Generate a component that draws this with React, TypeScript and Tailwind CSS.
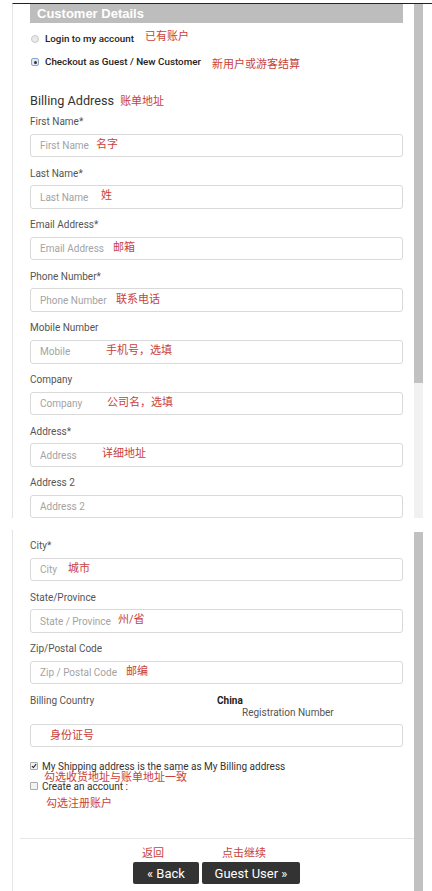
import type { ReactNode } from "react";

type Field = {
  label: string;
  placeholder: string;
  note?: string;
  noteLeft?: string;
};

const billingTop: Field[] = [
  { label: "First Name*", placeholder: "First Name", note: "名字", noteLeft: "left-[66px]" },
  { label: "Last Name*", placeholder: "Last Name", note: "姓", noteLeft: "left-[71px]" },
  { label: "Email Address*", placeholder: "Email Address", note: "邮箱", noteLeft: "left-[83px]" },
  { label: "Phone Number*", placeholder: "Phone Number", note: "联系电话", noteLeft: "left-[86px]" },
  { label: "Mobile Number", placeholder: "Mobile", note: "手机号，选填", noteLeft: "left-[76px]" },
  { label: "Company", placeholder: "Company", note: "公司名，选填", noteLeft: "left-[77px]" },
  { label: "Address*", placeholder: "Address", note: "详细地址", noteLeft: "left-[72px]" },
  { label: "Address 2", placeholder: "Address 2" },
];

const billingBottom: Field[] = [
  { label: "City*", placeholder: "City", note: "城市", noteLeft: "left-[38px]" },
  { label: "State/Province", placeholder: "State / Province", note: "州/省", noteLeft: "left-[88px]" },
  { label: "Zip/Postal Code", placeholder: "Zip / Postal Code", note: "邮编", noteLeft: "left-[96px]" },
];

const Note = ({ children, className = "" }: { children: ReactNode; className?: string }) => (
  <span className={`text-[11px] leading-none text-[#c8413b] whitespace-nowrap ${className}`}>
    {children}
  </span>
);

const InputBox = ({ placeholder, note, noteLeft }: Omit<Field, "label">) => (
  <div className="relative h-[23.6px]">
    <input
      type="text"
      placeholder={placeholder}
      className="h-full w-full rounded-[3px] border border-[#d9d9d9] bg-white px-[9px] text-[10px] text-[#333] outline-none placeholder:text-[#a3a3a3]"
    />
    {note && (
      <Note className={`pointer-events-none absolute top-1/2 -translate-y-1/2 ${noteLeft}`}>{note}</Note>
    )}
  </div>
);

const FormField = ({ field }: { field: Field }) => (
  <div className="mb-[11px]">
    <div className="mb-[3px] h-[14px] text-[10px] leading-[14px] text-[#555]">{field.label}</div>
    <InputBox placeholder={field.placeholder} note={field.note} noteLeft={field.noteLeft} />
  </div>
);

const Radio = ({ checked }: { checked?: boolean }) =>
  checked ? (
    <span className="flex h-[8px] w-[8px] shrink-0 items-center justify-center rounded-[2px] border border-[#8ea6c8] bg-[#dfe8f5]">
      <span className="block h-[3px] w-[3px] rounded-full bg-[#333]" />
    </span>
  ) : (
    <span className="block h-[8px] w-[8px] shrink-0 rounded-full border border-[#c8c8c8] bg-[#e9e9e9]" />
  );

const Checkbox = ({ checked }: { checked?: boolean }) => (
  <span className="flex h-[8px] w-[8px] shrink-0 items-center justify-center rounded-[1px] border border-[#aaa] bg-[#f2f2f2]">
    {checked && (
      <svg viewBox="0 0 10 10" className="h-[8px] w-[8px]">
        <path d="M1.5 5.2 L4 7.6 L8.6 1.8" fill="none" stroke="#222" strokeWidth="1.8" />
      </svg>
    )}
  </span>
);

export default function App() {
  return (
    <div className="h-[891px] w-[432px] overflow-hidden bg-white font-[Roboto,'Noto_Sans_CJK_SC',sans-serif]">
      {/* first capture */}
      <div className="ml-[12px] mt-[3px] flex h-[515px] border-l border-t border-l-[#e4e4e4] border-t-[#222]">
        <div className="flex-1 pl-[17px] pr-[11px]">
          <div className="flex h-[19px] items-center bg-[#bdbdbd] pl-[7px] font-['Liberation_Sans',sans-serif] text-[13px] font-bold text-white">
            Customer Details
          </div>

          <div className="mt-[8px] flex h-[16px] items-center pl-[1px]">
            <Radio />
            <span className="ml-[6px] text-[9.8px] font-medium text-[#222]">Login to my account</span>
            <Note className="ml-[11px] -translate-y-[3px]">已有账户</Note>
          </div>

          <div className="mt-[7px] flex h-[16px] items-center pl-[1px]">
            <Radio checked />
            <span className="ml-[6px] text-[9.8px] font-medium text-[#222]">Checkout as Guest / New Customer</span>
            <Note className="ml-[11px] translate-y-[2px]">新用户或游客结算</Note>
          </div>

          <div className="mt-[21px] flex h-[20px] items-center">
            <span className="text-[12.7px] text-[#333]">Billing Address</span>
            <Note className="ml-[6px]">账单地址</Note>
          </div>

          <div className="mt-[4px]">
            {billingTop.map((f) => (
              <FormField key={f.label} field={f} />
            ))}
          </div>
        </div>
        <div className="mr-[9px] flex w-[9px] flex-col">
          <div className="h-[379px] bg-[#c1c1c1]" />
          <div className="flex-1 bg-[#f1f1f1]" />
        </div>
      </div>

      {/* second capture */}
      <div className="ml-[12px] mt-[12px] flex h-[361px] border-l border-l-[#e4e4e4]">
        <div className="flex-1 pl-[17px] pr-[11px] pt-[9px]">
          {billingBottom.map((f) => (
            <FormField key={f.label} field={f} />
          ))}

          <div className="relative h-[30px] text-[10px] text-[#555]">
            <div className="h-[14px] leading-[14px]">Billing Country</div>
            <div className="absolute left-[187px] top-0 h-[14px] font-bold leading-[14px] text-[#222]">China</div>
            <div className="absolute left-[212px] top-[12px] h-[14px] leading-[14px]">Registration Number</div>
          </div>
          <div className="flex h-[23.6px] items-center rounded-[3px] border border-[#d9d9d9] pl-[19px]">
            <Note>身份证号</Note>
          </div>

          <div className="relative mt-[12px] h-[50px] text-[10px] text-[#333]">
            <div className="flex h-[14px] items-center">
              <Checkbox checked />
              <span className="ml-[4px]">My Shipping address is the same as My Billing address</span>
            </div>
            <Note className="absolute left-[14px] top-[13px]">勾选收货地址与账单地址一致</Note>
            <div className="mt-[6px] flex h-[14px] items-center">
              <Checkbox />
              <span className="ml-[4px]">Create an account :</span>
            </div>
            <Note className="absolute left-[16px] top-[39px]">勾选注册账户</Note>
          </div>

          <div className="-mr-[11px] ml-[-10px] mt-[29px] border-t border-[#e6e6e6]" />

          <div className="mt-[9px] flex justify-center gap-[3px]">
            <div className="w-[66px]">
              <Note className="ml-[9px] block">返回</Note>
              <button
                type="button"
                className="mt-[3px] flex h-[22px] w-[66px] items-center justify-center rounded-[2px] bg-[#333] text-[13px] text-white"
              >
                « Back
              </button>
            </div>
            <div className="w-[98px]">
              <Note className="ml-[20px] block">点击继续</Note>
              <button
                type="button"
                className="mt-[3px] flex h-[22px] w-[98px] items-center justify-center rounded-[2px] bg-[#333] text-[13px] text-white"
              >
                Guest User »
              </button>
            </div>
          </div>
        </div>
        <div className="mr-[9px] flex w-[9px] flex-col pt-[2px]">
          <div className="flex-1 bg-[#c1c1c1]" />
        </div>
      </div>
    </div>
  );
}
